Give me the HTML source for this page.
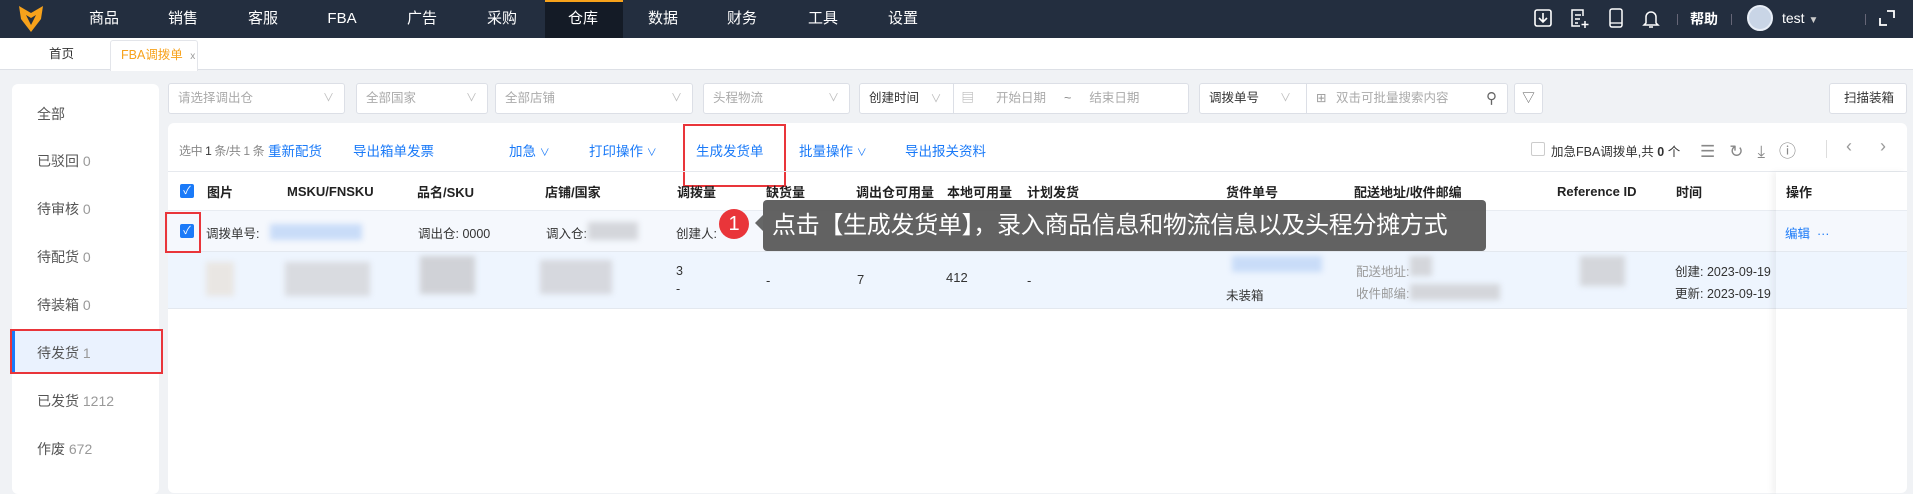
<!DOCTYPE html>
<html><head><meta charset="utf-8"><style>
*{box-sizing:border-box;margin:0;padding:0}
body{width:1913px;height:485px;overflow:hidden;background:#f0f2f5;font-family:"Liberation Sans","Noto Sans CJK SC",sans-serif;font-size:13px;color:#333;position:relative}
.a{position:absolute;white-space:nowrap}
.nav{left:0;top:0;width:1913px;height:38px;background:#232e3f}
.nv{top:0;height:38px;line-height:38px;color:#fff;font-size:15px;transform:translateX(-50%)}
.box{background:#fff;border:1px solid #dcdfe6;border-radius:3px;height:31px;top:83px;line-height:29px;padding-left:9px;color:#aaa;font-size:12.5px}
.car{position:absolute;right:10px;top:0;color:#bbb;font-size:11px}
.bl{color:#1a7af8;font-size:13.5px;top:140px}
.hd{top:182px;font-weight:bold;font-size:13px;color:#222}
.side{color:#555;font-size:14px;left:37px}
.side b{font-weight:normal;color:#999}
.cb{width:14px;height:14px;background:#1a7af8;border-radius:2px;color:#fff;font-size:11px;line-height:14px;text-align:center}
.blur{filter:blur(3px);background:#d4d6db}
.rb{border:2px solid #e9353a}
</style></head><body>
<div class="a nav"></div>
<svg class="a" style="left:18px;top:5px" width="26" height="28" viewBox="0 0 26 28"><path d="M1 1 L13 8 L25 1 L23 14 L13 27 L3 14Z" fill="#f7a21b"/><path d="M8 10 L13 13 L18 10 L13 20Z" fill="#232e3f"/></svg>
<div class="a" style="left:545px;top:0;width:78px;height:38px;background:#141b26;border-top:2px solid #f7a21b"></div>
<div class="a nv" style="left:104px">商品</div><div class="a nv" style="left:183px">销售</div><div class="a nv" style="left:263px">客服</div><div class="a nv" style="left:342px">FBA</div><div class="a nv" style="left:422px">广告</div><div class="a nv" style="left:502px">采购</div><div class="a nv" style="left:583px">仓库</div><div class="a nv" style="left:663px">数据</div><div class="a nv" style="left:742px">财务</div><div class="a nv" style="left:823px">工具</div><div class="a nv" style="left:903px">设置</div>
<svg class="a" style="left:1533px;top:8px" width="20" height="20"><rect x="2" y="2" width="16" height="16" rx="2" fill="none" stroke="#fff" stroke-width="1.6"/><path d="M10 5v9M6 10l4 4 4-4" fill="none" stroke="#fff" stroke-width="1.6"/></svg>
<svg class="a" style="left:1569px;top:8px" width="20" height="22"><path d="M14 8V2H3v16h8M6 7h6M6 11h5M6 15h3M16 13v7M12.5 16.5h7" fill="none" stroke="#fff" stroke-width="1.5"/></svg>
<svg class="a" style="left:1608px;top:7px" width="16" height="22"><rect x="2" y="2" width="12" height="18" rx="2" fill="none" stroke="#fff" stroke-width="1.5"/><path d="M2 16h12" stroke="#fff" stroke-width="1.3"/></svg>
<svg class="a" style="left:1642px;top:7px" width="18" height="22"><path d="M4 16V10a5 5 0 0 1 10 0v6l2 2H2z M7 20h4" fill="none" stroke="#fff" stroke-width="1.5"/></svg>
<div class="a" style="left:1677px;top:14px;width:1px;height:11px;background:#667"></div>
<div class="a" style="left:1690px;top:0;line-height:38px;color:#fff;font-size:14px;font-weight:bold">帮助</div>
<div class="a" style="left:1731px;top:14px;width:1px;height:11px;background:#667"></div>
<div class="a" style="left:1747px;top:5px;width:26px;height:26px;border-radius:50%;background:#c9d5e6;border:2px solid #e8eef7"></div>
<div class="a" style="left:1782px;top:0;line-height:36px;color:#fff;font-size:14px">test <span style="font-size:10px;color:#ccc">▼</span></div>
<div class="a" style="left:1865px;top:14px;width:1px;height:11px;background:#667"></div>
<svg class="a" style="left:1877px;top:8px" width="20" height="20"><path d="M10 3h7v7M3 10v7h7" fill="none" stroke="#fff" stroke-width="1.8"/></svg>
<div class="a" style="left:0;top:38px;width:1913px;height:32px;background:#fff;border-bottom:1px solid #dde0e6"></div>
<div class="a" style="left:49px;top:38px;line-height:32px;font-size:12.5px;color:#333">首页</div>
<div class="a" style="left:110px;top:40px;width:88px;height:31px;background:#fff;border:1px solid #e3e5ea;border-bottom:none;border-radius:3px 3px 0 0;line-height:29px;padding-left:10px;color:#f7a21b;font-size:12.5px">FBA调拨单 <span style="color:#999;font-size:10px;margin-left:4px">x</span></div>
<div class="a" style="left:12px;top:84px;width:147px;height:410px;background:#fff;border-radius:6px"></div>
<div class="a" style="left:12px;top:329px;width:150px;height:44px;background:#eaf2fe;border-left:3px solid #1a7af8"></div>
<div class="a rb" style="left:10px;top:329px;width:153px;height:45px"></div>
<div class="a side" style="top:104px">全部</div>
<div class="a side" style="top:151px">已驳回 <b>0</b></div>
<div class="a side" style="top:199px">待审核 <b>0</b></div>
<div class="a side" style="top:247px">待配货 <b>0</b></div>
<div class="a side" style="top:295px">待装箱 <b>0</b></div>
<div class="a side" style="top:343px">待发货 <b>1</b></div>
<div class="a side" style="top:391px">已发货 <b>1212</b></div>
<div class="a side" style="top:439px">作废 <b>672</b></div>
<div class="a box" style="left:168px;width:177px">请选择调出仓<span class="car">∨</span></div>
<div class="a box" style="left:356px;width:132px">全部国家<span class="car">∨</span></div>
<div class="a box" style="left:495px;width:198px">全部店铺<span class="car">∨</span></div>
<div class="a box" style="left:703px;width:147px">头程物流<span class="car">∨</span></div>
<div class="a box" style="left:859px;width:330px;color:#333">创建时间 <span style="color:#bbb;font-size:11px;margin-left:8px">∨</span><span style="position:absolute;left:93px;top:0;width:1px;height:29px;background:#dcdfe6"></span><span style="color:#aaa;margin-left:20px">▤</span><span style="color:#aaa;margin-left:22px">开始日期</span><span style="color:#888;margin-left:18px">~</span><span style="color:#aaa;margin-left:18px">结束日期</span></div>
<div class="a box" style="left:1199px;width:309px;color:#333">调拨单号<span style="position:absolute;left:80px;color:#bbb;font-size:11px">∨</span><span style="position:absolute;left:106px;top:0;width:1px;height:29px;background:#dcdfe6"></span><span style="position:absolute;left:116px;color:#999">⊞</span><span style="position:absolute;left:136px;color:#aaa">双击可批量搜索内容</span><span style="position:absolute;right:10px;color:#666;font-size:15px">⚲</span></div>
<div class="a box" style="left:1514px;width:29px;padding:0;text-align:center;color:#555">▽</div>
<div class="a box" style="left:1829px;width:78px;color:#333;padding-left:14px">扫描装箱</div>
<div class="a" style="left:168px;top:123px;width:1739px;height:370px;background:#fff;border-radius:6px"></div>
<div class="a" style="left:179px;top:142px;color:#888;font-size:12px;letter-spacing:-0.4px">选中 <b style="color:#333;font-weight:normal">1</b> 条/共 1 条</div>
<div class="a bl" style="left:268px">重新配货</div>
<div class="a bl" style="left:353px">导出箱单发票</div>
<div class="a bl" style="left:509px">加急 <span style="font-size:10px">∨</span></div>
<div class="a bl" style="left:589px">打印操作 <span style="font-size:10px">∨</span></div>
<div class="a bl" style="left:696px">生成发货单</div>
<div class="a rb" style="left:683px;top:124px;width:103px;height:63px"></div>
<div class="a bl" style="left:799px">批量操作 <span style="font-size:10px">∨</span></div>
<div class="a bl" style="left:905px">导出报关资料</div>
<div class="a" style="left:1531px;top:142px;width:14px;height:14px;border:1px solid #ccc;border-radius:2px"></div>
<div class="a" style="left:1551px;top:141px;font-size:12.5px;color:#333">加急FBA调拨单,共 <b>0</b> 个</div>
<div class="a" style="left:1700px;top:137px;color:#888;font-size:17px;letter-spacing:14px">☰↻⤓ⓘ</div>
<div class="a" style="left:1826px;top:140px;width:1px;height:18px;background:#ddd"></div>
<div class="a" style="left:1846px;top:136px;color:#999;font-size:18px">‹</div>
<div class="a" style="left:1880px;top:136px;color:#999;font-size:18px">›</div>
<div class="a" style="left:168px;top:171px;width:1739px;height:1px;background:#e6e9ee"></div>
<div class="a cb" style="left:180px;top:184px">✓</div>
<div class="a hd" style="left:207px">图片</div><div class="a hd" style="left:287px;top:184px">MSKU/FNSKU</div><div class="a hd" style="left:417px">品名/SKU</div><div class="a hd" style="left:545px">店铺/国家</div><div class="a hd" style="left:677px">调拨量</div><div class="a hd" style="left:766px">缺货量</div><div class="a hd" style="left:856px">调出仓可用量</div><div class="a hd" style="left:947px">本地可用量</div><div class="a hd" style="left:1027px">计划发货</div><div class="a hd" style="left:1226px">货件单号</div><div class="a hd" style="left:1354px">配送地址/收件邮编</div><div class="a hd" style="left:1557px;top:184px">Reference ID</div><div class="a hd" style="left:1676px">时间</div><div class="a hd" style="left:1786px">操作</div>
<div class="a" style="left:168px;top:210px;width:1739px;height:41px;background:#f5f8fd;border-top:1px solid #e8ecf2"></div>
<div class="a" style="left:168px;top:251px;width:1739px;height:58px;background:#eef5fe;border-top:1px solid #e3e8ef;border-bottom:1px solid #e3e8ef"></div>
<div class="a" style="left:1776px;top:172px;width:131px;height:322px;box-shadow:-4px 0 6px rgba(0,0,0,0.05)"></div>
<div class="a cb" style="left:180px;top:224px">✓</div>
<div class="a rb" style="left:165px;top:212px;width:36px;height:41px"></div>
<div class="a" style="left:206px;top:223px;font-size:12.5px">调拨单号:</div>
<div class="a blur" style="left:270px;top:224px;width:92px;height:16px;background:#c9dcf8"></div>
<div class="a" style="left:418px;top:223px;font-size:12.5px">调出仓: 0000</div>
<div class="a" style="left:546px;top:223px;font-size:12.5px">调入仓:</div>
<div class="a blur" style="left:588px;top:222px;width:50px;height:18px"></div>
<div class="a" style="left:676px;top:223px;font-size:12.5px">创建人:</div>
<div class="a" style="left:1785px;top:223px;font-size:12.5px;color:#1a7af8">编辑 &nbsp;···</div>
<div class="a blur" style="left:206px;top:262px;width:28px;height:34px;background:#e9e6e3"></div>
<div class="a blur" style="left:285px;top:262px;width:85px;height:34px;background:#d9dbe0"></div>
<div class="a blur" style="left:420px;top:256px;width:55px;height:38px;background:#d0d2d7"></div>
<div class="a blur" style="left:540px;top:260px;width:72px;height:34px;background:#d6d8de"></div>
<div class="a" style="left:676px;top:262px;font-size:12.5px;line-height:18px">3<br>-</div>
<div class="a" style="left:766px;top:273px">-</div>
<div class="a" style="left:857px;top:272px">7</div>
<div class="a" style="left:946px;top:270px">412</div>
<div class="a" style="left:1027px;top:273px">-</div>
<div class="a blur" style="left:1232px;top:256px;width:90px;height:16px;background:#c9dcf8"></div>
<div class="a" style="left:1226px;top:285px;font-size:12.5px">未装箱</div>
<div class="a" style="left:1356px;top:261px;font-size:12.5px;color:#999;line-height:22px">配送地址:<br>收件邮编:</div>
<div class="a blur" style="left:1410px;top:256px;width:22px;height:20px"></div>
<div class="a blur" style="left:1410px;top:284px;width:90px;height:16px"></div>
<div class="a blur" style="left:1580px;top:256px;width:45px;height:30px"></div>
<div class="a" style="left:1675px;top:261px;font-size:12.5px;line-height:22px;width:100px;overflow:hidden">创建: 2023-09-19<br>更新: 2023-09-19</div>
<div class="a" style="left:755px;top:215px;width:0;height:0;border-top:8px solid transparent;border-bottom:8px solid transparent;border-right:8px solid rgba(85,85,85,0.9)"></div>
<div class="a" style="left:763px;top:200px;width:723px;height:51px;background:rgba(85,85,85,0.92);border-radius:4px;color:#fff;font-size:24px;line-height:51px;padding-left:9px;letter-spacing:-0.3px">点击【生成发货单】，录入商品信息和物流信息以及头程分摊方式</div>
<div class="a" style="left:719px;top:209px;width:30px;height:30px;border-radius:50%;background:#e9353a;color:#fff;font-size:20px;line-height:30px;text-align:center">1</div>
</body></html>
